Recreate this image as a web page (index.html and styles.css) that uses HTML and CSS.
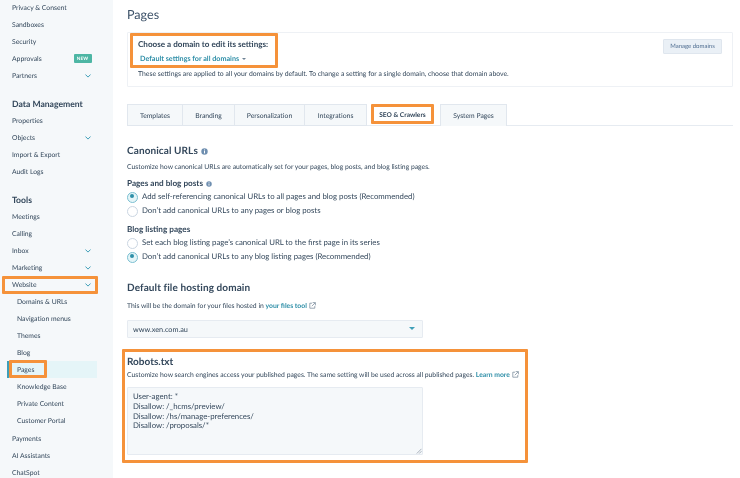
FILE: index.html
```html
<!DOCTYPE html>
<html lang="en">
<head>
<meta charset="utf-8">
<title>Pages</title>
<link rel="stylesheet" href="styles.css">
</head>
<body>
<svg class="defs" width="0" height="0" aria-hidden="true">
  <symbol id="chev" viewBox="0 0 6 4"><path d="M.7.8L3 3.1 5.3.8" fill="none" stroke="#3f9fb8" stroke-width="1" stroke-linecap="round" stroke-linejoin="round"/></symbol>
  <symbol id="info" viewBox="0 0 7 7"><circle cx="3.5" cy="3.5" r="3.2" fill="#6f8fb0"/><rect x="3" y="3" width="1" height="2.4" fill="#fff"/><rect x="3" y="1.5" width="1" height="1" fill="#fff"/></symbol>
  <symbol id="ext" viewBox="0 0 7 7"><path d="M3 1.2H.8v5h5V4M3.6.6h2.8v2.8M6.2.8L2.8 4.2" fill="none" stroke="#6f8294" stroke-width=".7"/></symbol>
</svg>
<aside class="sidebar">
  <ul class="nav">
    <li class="item">Privacy &amp; Consent</li>
    <li class="item">Sandboxes</li>
    <li class="item">Security</li>
    <li class="item">Approvals<span class="badge">NEW</span></li>
    <li class="item">Partners<svg class="chev"><use href="#chev"/></svg></li>
  </ul>
  <h3 class="group">Data Management</h3>
  <ul class="nav">
    <li class="item">Properties</li>
    <li class="item">Objects<svg class="chev"><use href="#chev"/></svg></li>
    <li class="item">Import &amp; Export</li>
    <li class="item">Audit Logs</li>
  </ul>
  <h3 class="group">Tools</h3>
  <ul class="nav">
    <li class="item">Meetings</li>
    <li class="item">Calling</li>
    <li class="item">Inbox<svg class="chev"><use href="#chev"/></svg></li>
    <li class="item">Marketing<svg class="chev"><use href="#chev"/></svg></li>
    <li class="item has-mark">Website<svg class="chev"><use href="#chev"/></svg><span class="mark mark-website"></span></li>
  </ul>
  <ul class="nav subnav">
    <li class="item sub">Domains &amp; URLs</li>
    <li class="item sub">Navigation menus</li>
    <li class="item sub">Themes</li>
    <li class="item sub">Blog</li>
    <li class="item sub active has-mark">Pages<span class="mark mark-pages"></span></li>
    <li class="item sub">Knowledge Base</li>
    <li class="item sub">Private Content</li>
    <li class="item sub">Customer Portal</li>
  </ul>
  <ul class="nav">
    <li class="item">Payments</li>
    <li class="item">AI Assistants</li>
    <li class="item">ChatSpot</li>
  </ul>
</aside>
<main class="main">
  <h1 class="title">Pages</h1>
  <section class="card">
    <div class="card-top">
      <div class="domain has-mark">
        <p class="choose">Choose a domain to edit its settings:</p>
        <p class="domain-link">Default settings for all domains<span class="caret"></span></p>
        <span class="mark mark-domain"></span>
      </div>
      <button class="btn">Manage domains</button>
    </div>
    <p class="card-note">These settings are applied to all your domains by default. To change a setting for a single domain, choose that domain above.</p>
  </section>
  <nav class="tabs">
    <span class="tab t1">Templates</span>
    <span class="tab t2">Branding</span>
    <span class="tab t3">Personalization</span>
    <span class="tab t4">Integrations</span>
    <span class="tab tab-active has-mark">SEO &amp; Crawlers<span class="mark mark-seo"></span></span>
    <span class="tab t6">System Pages</span>
  </nav>
  <h2 class="h2 canon">Canonical URLs<svg class="info big"><use href="#info"/></svg></h2>
  <p class="desc canon-desc">Customize how canonical URLs are automatically set for your pages, blog posts, and blog listing pages.</p>
  <h4 class="h4 h4a">Pages and blog posts<svg class="info"><use href="#info"/></svg></h4>
  <div class="radio on">Add self-referencing canonical URLs to all pages and blog posts (Recommended)</div>
  <div class="radio">Don’t add canonical URLs to any pages or blog posts</div>
  <h4 class="h4 h4b">Blog listing pages</h4>
  <div class="radio">Set each blog listing page’s canonical URL to the first page in its series</div>
  <div class="radio on">Don’t add canonical URLs to any blog listing pages (Recommended)</div>
  <h2 class="h2 hosting">Default file hosting domain</h2>
  <p class="desc host-desc">This will be the domain for your files hosted in <a class="link">your files tool</a><svg class="ext"><use href="#ext"/></svg></p>
  <div class="select">www.xen.com.au<span class="select-caret"></span></div>
  <section class="robots has-mark">
    <h2 class="h2 robots-h">Robots.txt</h2>
    <p class="desc robots-desc">Customize how search engines access your published pages. The same setting will be used across all published pages. <a class="link">Learn more</a><svg class="ext"><use href="#ext"/></svg></p>
    <div class="textarea">User-agent: *<br>Disallow: /_hcms/preview/<br>Disallow: /hs/manage-preferences/<br>Disallow: /proposals/*<svg class="grip" viewBox="0 0 6 6"><path d="M5.5.8L.8 5.5M5.5 3.2L3.2 5.5" stroke="#8a97a5" stroke-width=".7"/></svg></div>
    <span class="mark mark-robots"></span>
  </section>
</main>
</body>
</html>
```
FILE: styles.css
```css
* { box-sizing: border-box; }
html, body { margin: 0; padding: 0; height: 478px; overflow: hidden; background: #fff; }
body { display: flex; font-family: Lato, "Noto Sans", sans-serif; color: #33475b; text-rendering: geometricPrecision; filter: blur(.3px); }
.defs { position: absolute; }
p, h1, h2, h3, h4, ul { margin: 0; padding: 0; }
ul { list-style: none; }

.sidebar { flex: 0 0 113px; height: 479px; background: #f5f8fa; overflow: hidden; margin-top: -1px; }
.item { height: 17px; line-height: 15px; font-size: 6.8px; color: #33475b; padding: 1.5px 21px 0 12px; display: flex; align-items: center; justify-content: space-between; position: relative; }
.group { height: 17px; line-height: 18px; font-size: 8.6px; font-weight: 700; color: #33475b; padding-left: 12px; margin-top: 11px; }
.badge { background: #4db6a4; color: #fff; font-size: 4.6px; font-weight: 700; width: 18px; height: 9px; line-height: 9px; text-align: center; border-radius: 1px; letter-spacing: .2px; margin: -1.5px .5px 0 0; }
.chev { width: 6px; height: 4px; margin: -1.5px 1px 0 0; }
.sub { padding-left: 17px; }
.subnav { margin-bottom: 1px; }
.active { margin-left: 7px; margin-right: 16px; background: #e5f5f8; border-left: 2px solid #3f9fb8; padding-left: 8px; }

.has-mark { position: relative; }
.mark { position: absolute; border: 3px solid #f5923a; border-radius: 1px; pointer-events: none; }
.mark-website { left: 2px; top: 0; width: 96px; height: 18px; }
.mark-pages { left: 0; top: -1px; width: 38px; height: 18px; }
.mark-domain { left: 2px; top: 0; width: 148px; height: 35px; }
.mark-seo { left: 0; top: 0; width: 63px; height: 20px; }
.mark-robots { left: 0; top: 0; width: 406px; height: 114px; }

.main { flex: 1; padding: 0 7px 0 14px; min-width: 0; }
.title { font-size: 12.6px; font-weight: 400; line-height: 20px; padding-top: 5px; height: 32px; color: #3d5269; }
.card { height: 55px; border: 1px solid #eef1f5; border-radius: 1px; position: relative; }
.card-top { display: flex; justify-content: space-between; }
.domain { width: 151px; height: 35px; padding: 5px 0 0 10px; }
.choose { font-size: 8.1px; font-weight: 700; line-height: 12px; }
.domain-link { font-size: 7.2px; font-weight: 700; color: #2f8fa8; line-height: 12px; margin-top: 3px; padding-left: 2px; }
.caret { display: inline-block; border: 2px solid transparent; border-top: 2.5px solid #6f8294; margin-left: 3px; vertical-align: -1px; }
.btn { margin: 6px 10px 0 0; width: 59px; height: 15px; padding: 0; font: 6px Lato, sans-serif; color: #506e91; background: #eaf0f6; border: 1px solid #dfe6ee; border-radius: 1px; text-rendering: geometricPrecision; }
.card-note { font-size: 6.85px; line-height: 10px; padding: 1px 0 0 10px; }

.tabs { display: flex; height: 22px; margin-top: 17px; border-bottom: 1px solid #e6ebf1; position: relative; }
.tab { font-size: 6.8px; line-height: 22px; text-align: center; background: #f5f8fa; border: 1px solid #e1e7ee; border-left: 0; height: 22px; position: relative; }
.t1 { width: 56px; border-left: 1px solid #e1e7ee; }
.t2 { width: 52px; }
.t3 { width: 70px; }
.t4 { width: 62px; }
.tab-active { width: 63px; margin-left: 4px; background: #fff; border: 0; height: 20px; line-height: 22px; font-size: 6.6px; font-weight: 700; }
.t6 { width: 67px; margin-left: 6px; border-left: 1px solid #e1e7ee; border-bottom: 0; }

.h2 { font-weight: 700; color: #33475b; }
.canon { font-size: 10px; line-height: 14px; margin-top: 18px; letter-spacing: .1px; }
.info { width: 6px; height: 6px; margin-left: 3px; vertical-align: -.5px; }
.big { width: 7px; height: 7px; }
.desc { font-size: 6.8px; line-height: 10px; }
.canon-desc { margin-top: 4px; }
.h4 { font-size: 8.2px; font-weight: 700; line-height: 11px; }
.h4a { margin-top: 6px; }
.h4b { margin-top: 7px; }
.radio { font-size: 7.8px; line-height: 14px; height: 14px; padding-left: 15px; position: relative; }
.radio::before { content: ""; position: absolute; left: 0; top: 2.5px; width: 9px; height: 9px; border: 1px solid #cbd6e2; border-radius: 50%; background: #fff; }
.on::after { content: ""; position: absolute; left: 2.5px; top: 5px; width: 4px; height: 4px; border-radius: 50%; background: #2f8fa8; }
.on::before { border-color: #7cc0d2; background: #e5f5f8; }
.hosting { font-size: 10px; line-height: 14px; margin-top: 18px; letter-spacing: .1px; }
.host-desc { margin-top: 6px; }
.link { color: #2f8fa8; font-weight: 700; }
.ext { width: 7px; height: 7px; margin-left: 2px; vertical-align: -1px; }
.select { width: 296px; height: 18px; margin-top: 9px; font-size: 7.3px; line-height: 17px; padding-left: 5px; background: #f5f8fa; border: 1px solid #e6ebf1; border-radius: 1px; position: relative; }
.select-caret { position: absolute; right: 7px; top: 6px; border: 3px solid transparent; border-top: 3.5px solid #3f9fb8; }
.robots { margin: 11px 0 0 -5px; width: 406px; height: 114px; padding: 5px 0 0 5px; }
.robots-h { font-size: 10px; line-height: 14px; padding-top: 1px; height: 14px; }
.robots-desc { margin-top: 2px; white-space: nowrap; }
.textarea { width: 296px; height: 68px; margin-top: 6.5px; padding: 4.5px 5px; font-size: 7.8px; line-height: 9.8px; background: #f5f8fa; border: 1px solid #e6ebf1; border-radius: 1px; position: relative; }
.grip { position: absolute; right: 0; bottom: 0; width: 6px; height: 6px; }
```
